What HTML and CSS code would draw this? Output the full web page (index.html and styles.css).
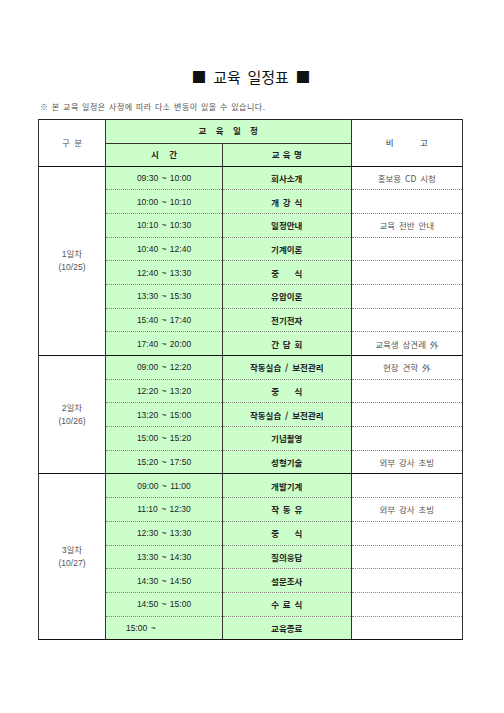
FILE: index.html
```html
<!DOCTYPE html>
<html lang="ko">
<head>
<meta charset="utf-8">
<title>교육 일정표</title>
<link rel="stylesheet" href="styles.css">
</head>
<body>
<div class="page">
  <h1 class="title">■ 교육 일정표 ■</h1>
  <p class="note">※ 본 교육 일정은 사정에 따라 다소 변동이 있을 수 있습니다.</p>
  <table class="sched">
    <colgroup>
      <col class="c1"><col class="c2"><col class="c3"><col class="c4">
    </colgroup>
    <thead>
      <tr class="h1">
        <th rowspan="2" class="gubun">구 분</th>
        <th colspan="2" class="green plan">교 육 일 정</th>
        <th rowspan="2" class="bigo">비 고</th>
      </tr>
      <tr class="h2">
        <th class="green sigan">시 간</th>
        <th class="green myeong">교 육 명</th>
      </tr>
    </thead>
    <tbody class="day">
      <tr><td rowspan="8" class="dlabel">1일차<br>(10/25)</td><td class="t">09:30 ~ 10:00</td><td class="s">회사소개</td><td class="r">홍보용 CD 시청</td></tr>
      <tr><td class="t">10:00 ~ 10:10</td><td class="s">개 강 식</td><td class="r"></td></tr>
      <tr><td class="t">10:10 ~ 10:30</td><td class="s">일정안내</td><td class="r">교육 전반 안내</td></tr>
      <tr><td class="t">10:40 ~ 12:40</td><td class="s">기계이론</td><td class="r"></td></tr>
      <tr><td class="t">12:40 ~ 13:30</td><td class="s wide">중 식</td><td class="r"></td></tr>
      <tr><td class="t">13:30 ~ 15:30</td><td class="s">유압이론</td><td class="r"></td></tr>
      <tr><td class="t">15:40 ~ 17:40</td><td class="s">전기전자</td><td class="r"></td></tr>
      <tr class="last"><td class="t">17:40 ~ 20:00</td><td class="s">간 담 회</td><td class="r">교육생 상견례 外</td></tr>
    </tbody>
    <tbody class="day">
      <tr><td rowspan="5" class="dlabel">2일차<br>(10/26)</td><td class="t">09:00 ~ 12:20</td><td class="s">작동실습 / 보전관리</td><td class="r">현장 견학 外</td></tr>
      <tr><td class="t">12:20 ~ 13:20</td><td class="s wide">중 식</td><td class="r"></td></tr>
      <tr><td class="t">13:20 ~ 15:00</td><td class="s">작동실습 / 보전관리</td><td class="r"></td></tr>
      <tr><td class="t">15:00 ~ 15:20</td><td class="s">기념촬영</td><td class="r"></td></tr>
      <tr class="last"><td class="t">15:20 ~ 17:50</td><td class="s">성형기술</td><td class="r">외부 강사 초빙</td></tr>
    </tbody>
    <tbody class="day">
      <tr><td rowspan="7" class="dlabel">3일차<br>(10/27)</td><td class="t">09:00 ~ 11:00</td><td class="s">개발기계</td><td class="r"></td></tr>
      <tr><td class="t">11:10 ~ 12:30</td><td class="s">작 동 유</td><td class="r">외부 강사 초빙</td></tr>
      <tr><td class="t">12:30 ~ 13:30</td><td class="s wide">중 식</td><td class="r"></td></tr>
      <tr><td class="t">13:30 ~ 14:30</td><td class="s">질의응답</td><td class="r"></td></tr>
      <tr><td class="t">14:30 ~ 14:50</td><td class="s">설문조사</td><td class="r"></td></tr>
      <tr><td class="t">14:50 ~ 15:00</td><td class="s">수 료 식</td><td class="r"></td></tr>
      <tr class="last"><td class="t open">15:00 ~</td><td class="s">교육종료</td><td class="r"></td></tr>
    </tbody>
  </table>
</div>
</body>
</html>
```

FILE: styles.css
```css
html, body {
  margin: 0;
  padding: 0;
  background: #ffffff;
}

body {
  font-family: "Liberation Sans", "Noto Sans CJK KR", sans-serif;
  color: #222;
}

.page {
  padding: 66px 42px 0 38px;
  width: 424px;
}

.title {
  margin: 0;
  font-family: "Noto Sans CJK KR", sans-serif;
  font-weight: 400;
  font-size: 15px;
  line-height: 22px;
  text-align: center;
  color: #111;
  word-spacing: 2.5px;
  padding-left: 2px;
}

.note {
  margin: 13px 0 0 2px;
  font-family: "Noto Sans CJK KR", sans-serif;
  font-size: 8px;
  line-height: 12px;
  color: #555;
  letter-spacing: 0.5px;
  word-spacing: 0.6px;
}

.sched {
  margin-top: 6px;
  width: 424px;
  table-layout: fixed;
  border-collapse: collapse;
  border: 1px solid #222;
  border-right-color: #666;
}

.c1 { width: 67px; }
.c2 { width: 117px; }
.c3 { width: 128.5px; }
.c4 { width: 111.5px; }

.sched th,
.sched td {
  padding: 0;
  text-align: center;
  vertical-align: middle;
  font-size: 8.5px;
  line-height: 12px;
  border-left: 1px solid #333;
  border-right: 1px solid #333;
}

.sched th {
  font-weight: 400;
  border-bottom: 1px solid #333;
}

.h1 { height: 23.5px; }
.h2 { height: 23px; }

.sched thead tr.h2 th { border-bottom: 1px solid #111; }

.green { background: #ccfecc; }

.gubun {
  color: #555;
  word-spacing: 2px;
  border-bottom: 1px solid #111 !important;
}

.bigo {
  color: #333;
  font-weight: 700;
  word-spacing: 24px;
  border-bottom: 1px solid #111 !important;
}

.plan {
  font-weight: 700 !important;
  word-spacing: 7px;
}

.sigan {
  font-weight: 700 !important;
  word-spacing: 8px;
}

.myeong {
  font-weight: 700 !important;
  word-spacing: 1px;
}

.day tr { height: 23.7px; }

.day td {
  border-bottom: 1px dotted #888;
}

.day tr.last td {
  border-bottom: 1px solid #111;
}

.day td.dlabel {
  background: #fff;
  color: #555;
  line-height: 13px;
  border-bottom: 1px solid #111;
}

.t {
  background: #ccfecc;
  color: #222;
  word-spacing: 1px;
}

.t.open {
  text-align: left;
  padding-left: 20px;
}

.s {
  background: #ccfecc;
  font-weight: 700;
  color: #222;
  font-family: "Noto Sans CJK KR", sans-serif;
  word-spacing: 1.5px;
}

.s.wide { word-spacing: 13px; }

.r {
  color: #555;
  word-spacing: 1.5px;
  font-family: "Noto Sans CJK KR", sans-serif;
}
```
